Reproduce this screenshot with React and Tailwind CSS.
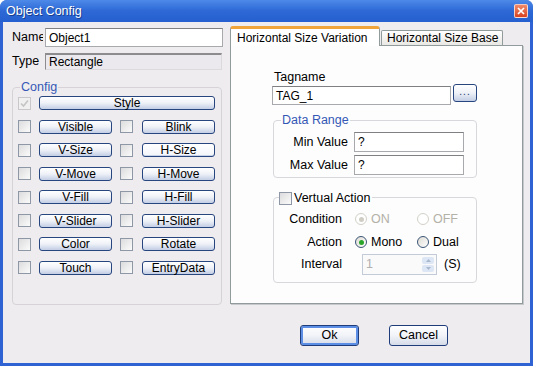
import React from "react";

const Check = ({ checked, disabled, className = "" }) => (
  <span
    className={`w-[13px] h-[13px] shrink-0 border flex items-center justify-center ${
      disabled
        ? "border-[#c9c7c9] bg-[#f1f0f1]"
        : "border-[#8d97a5] bg-linear-to-br from-[#dcdcde] to-[#fbfbfb]"
    } ${className}`}
  >
    {checked && (
      <svg width="9" height="9" viewBox="0 0 9 9">
        <path d="M1 4.5 L3.5 7 L8 1.5" fill="none" stroke="#c4c4c4" strokeWidth="1.6" />
      </svg>
    )}
  </span>
);

const Btn = ({ children, className = "", hot }) => (
  <div
    className={`flex items-center justify-center border border-[#27457e] rounded-[3px] text-[12px] leading-none ${
      hot
        ? "bg-linear-to-b from-white to-[#f3f5fa] shadow-[inset_0_-1px_0_#c7d2e8]"
        : "bg-linear-to-b from-white via-[#eef1f7] to-[#c3cee5]"
    } ${className}`}
  >
    {children}
  </div>
);

const Radio = ({ checked, disabled }) => (
  <span
    className={`w-[12px] h-[12px] shrink-0 rounded-full border flex items-center justify-center ${
      disabled
        ? "border-[#d2d0c8] bg-white"
        : "border-[#3b5576] bg-linear-to-br from-[#dedbd4] to-white"
    }`}
  >
    {checked && (
      <span
        className={`w-[5px] h-[5px] rounded-full ${
          disabled ? "bg-[#cfcdc4]" : "bg-[#2aa52a]"
        }`}
      />
    )}
  </span>
);

const Field = ({ children, className = "" }) => (
  <div
    className={`bg-white border border-[#a7a9ad] border-t-[#7f8084] flex items-center pl-[3px] ${className}`}
  >
    {children}
  </div>
);

const rows = [
  ["Visible", "Blink"],
  ["V-Size", "H-Size"],
  ["V-Move", "H-Move"],
  ["V-Fill", "H-Fill"],
  ["V-Slider", "H-Slider"],
  ["Color", "Rotate"],
  ["Touch", "EntryData"],
];

export default function App() {
  return (
    <div className="w-[533px] h-[366px] flex flex-col bg-[#2f62d2] rounded-t-[7px] overflow-hidden font-['Liberation_Sans',Arial,sans-serif] text-[12px] text-black">
      {/* title bar */}
      <div className="h-[22px] shrink-0 flex items-center justify-between pl-[6px] pr-[5px] bg-linear-to-b from-[#4d8ae8] via-[#2d68d6] to-[#2660d0]">
        <span className="text-white text-[12.5px] [text-shadow:1px_1px_0_#1a3f8c]">Object Config</span>
        <div className="w-[14px] h-[14px] rounded-[2px] border border-white/70 bg-linear-to-b from-[#f08a6a] to-[#d8411d] flex items-center justify-center">
          <svg width="8" height="8" viewBox="0 0 8 8">
            <path d="M1 1 L7 7 M7 1 L1 7" stroke="white" strokeWidth="1.7" />
          </svg>
        </div>
      </div>

      {/* body */}
      <div className="flex-1 mx-[3px] mb-[3px] bg-[#efecf0] flex pt-[4px] pl-[9px]">
        {/* left column */}
        <div className="w-[211px] flex flex-col pt-[2px]">
          <div className="flex items-center h-[19px]">
            <div className="w-[31px] mr-[2px] overflow-hidden whitespace-nowrap text-[12.5px]">Name</div>
            <Field className="flex-1 h-[19px]">Object1</Field>
          </div>
          <div className="flex items-center h-[17px] mt-[6px] mr-[1px]">
            <div className="w-[33px] text-[12.5px]">Type</div>
            <div className="flex-1 h-[17px] bg-[#ebe9ed] border-t-2 border-l border-[#8c8b8e] border-b border-r border-b-[#dcdadd] border-r-[#dcdadd] flex items-center pl-[3px]">
              Rectangle
            </div>
          </div>

          {/* config group */}
          <div className="relative mt-[17px] mr-[1px] h-[218px] border border-[#d6d2d7] rounded-[4px] pt-[8px] pl-[5px] pr-[6px] flex flex-col gap-[9.5px]">
            <span className="absolute -top-[9px] left-[7px] px-[1px] bg-[#efecf0] text-[#3558b5] text-[12.5px] leading-[16px]">
              Config
            </span>
            <div className="flex items-center h-[14px]">
              <Check checked disabled />
              <Btn className="ml-[8px] flex-1 h-[14px]">Style</Btn>
            </div>
            {rows.map(([a, b]) => (
              <div key={a} className="flex items-center h-[14px]">
                <Check />
                <Btn className="ml-[8px] w-[73px] h-[14px]">{a}</Btn>
                <Check className="ml-[8px]" />
                <Btn className="ml-[9px] w-[73px] h-[14px]" hot={b === "H-Size"}>
                  {b}
                </Btn>
              </div>
            ))}
          </div>
        </div>

        {/* right column */}
        <div className="w-[293px] ml-[7px] flex flex-col">
          <div className="flex items-end h-[19px]">
            <div className="relative z-10 w-[150px] h-[20px] -mb-[1px] bg-white border-x border-[#919b9c] border-t-[3px] border-t-[#f0a53a] rounded-t-[3px] flex items-center pl-[6px]">
              Horizontal Size Variation
            </div>
            <div className="w-[122px] h-[15px] ml-[1px] border border-b-0 border-[#919b9c] rounded-t-[2px] bg-linear-to-b from-white to-[#e9e8e4] flex items-center pl-[5px]">
              Horizontal Size Base
            </div>
          </div>

          <div className="h-[259px] bg-[#fdfdfd] border border-[#919b9c] shadow-[1px_1px_0_#c6c9cc] pt-[24px] pl-[41px] flex flex-col">
            <div className="ml-[2px] leading-[14px] text-[12.5px]">Tagname</div>
            <div className="flex items-start">
              <Field className="mt-[2px] w-[179px] h-[19px]">TAG_1</Field>
              <Btn className="ml-[2px] w-[24px] h-[18px] items-end pb-[4px]">
                <span className="text-[10px] text-[#22366a] tracking-[1px] leading-none">...</span>
              </Btn>
            </div>

            {/* data range */}
            <div className="relative mt-[15px] ml-[1px] w-[204px] h-[58px] border border-[#d8d7dc] rounded-[4px] pt-[11px] pl-[4px] flex flex-col gap-[3px]">
              <span className="absolute -top-[9px] left-[7px] px-[1px] bg-[#fdfdfd] text-[#3558b5] text-[12.5px] leading-[16px]">
                Data Range
              </span>
              {["Min Value", "Max Value"].map((l) => (
                <div key={l} className="flex items-center h-[20px]">
                  <div className="w-[70px] text-right text-[12.5px]">{l}</div>
                  <Field className="ml-[6px] w-[110px] h-[20px]">?</Field>
                </div>
              ))}
            </div>

            {/* vertual action */}
            <div className="relative mt-[19px] ml-[1px] w-[204px] h-[86px] border border-[#d8d7dc] rounded-[4px] pt-[12px] pl-[4px] flex flex-col">
              <div className="absolute -top-[8px] left-[5px] pr-[2px] bg-[#fdfdfd] flex items-center gap-[2px] text-[12.5px] leading-[16px]">
                <Check />
                <span>Vertual Action</span>
              </div>
              <div className="flex items-center h-[18px] text-[12.5px]">
                <div className="w-[64px] text-right">Condition</div>
                <div className="ml-[13px] w-[62px] flex items-center gap-[4px] text-[#b3b1a8]">
                  <Radio checked disabled />
                  ON
                </div>
                <div className="flex items-center gap-[4px] text-[#b3b1a8]">
                  <Radio disabled />
                  OFF
                </div>
              </div>
              <div className="flex items-center h-[18px] mt-[5px] text-[12.5px]">
                <div className="w-[64px] text-right">Action</div>
                <div className="ml-[13px] w-[62px] flex items-center gap-[4px]">
                  <Radio checked />
                  Mono
                </div>
                <div className="flex items-center gap-[4px]">
                  <Radio />
                  Dual
                </div>
              </div>
              <div className="flex items-center h-[21px] mt-[3px] text-[12.5px]">
                <div className="w-[64px] text-right">Interval</div>
                <div className="ml-[20px] w-[75px] h-[21px] border border-[#c3cbd8] bg-[#fafafa] flex items-center justify-between pl-[3px] pr-[2px]">
                  <span className="text-[#b0b0b0]">1</span>
                  <div className="flex flex-col gap-[1px]">
                    <div className="w-[12px] h-[7px] rounded-[2px] bg-[#dde6f4] flex items-center justify-center">
                      <svg width="5" height="3" viewBox="0 0 5 3">
                        <path d="M0 3 L2.5 0 L5 3 Z" fill="#a9b7cf" />
                      </svg>
                    </div>
                    <div className="w-[12px] h-[7px] rounded-[2px] bg-[#dde6f4] flex items-center justify-center">
                      <svg width="5" height="3" viewBox="0 0 5 3">
                        <path d="M0 0 L2.5 3 L5 0 Z" fill="#a9b7cf" />
                      </svg>
                    </div>
                  </div>
                </div>
                <span className="ml-[7px]">(S)</span>
              </div>
            </div>
          </div>

          {/* buttons */}
          <div className="mt-[21px] flex justify-center gap-[30px] pr-[5px]">
            <div className="w-[59px] h-[21px] rounded-[3px] border border-[#1f3d7a] shadow-[inset_0_0_0_2px_#5d8ee6] bg-linear-to-b from-white via-[#f1f3f8] to-[#d5dbe8] flex items-center justify-center text-[12.5px]">
              Ok
            </div>
            <div className="w-[59px] h-[21px] rounded-[3px] border border-[#1f3d7a] bg-linear-to-b from-white via-[#f1f3f8] to-[#d5dbe8] flex items-center justify-center text-[12.5px]">
              Cancel
            </div>
          </div>
        </div>
      </div>
    </div>
  );
}
